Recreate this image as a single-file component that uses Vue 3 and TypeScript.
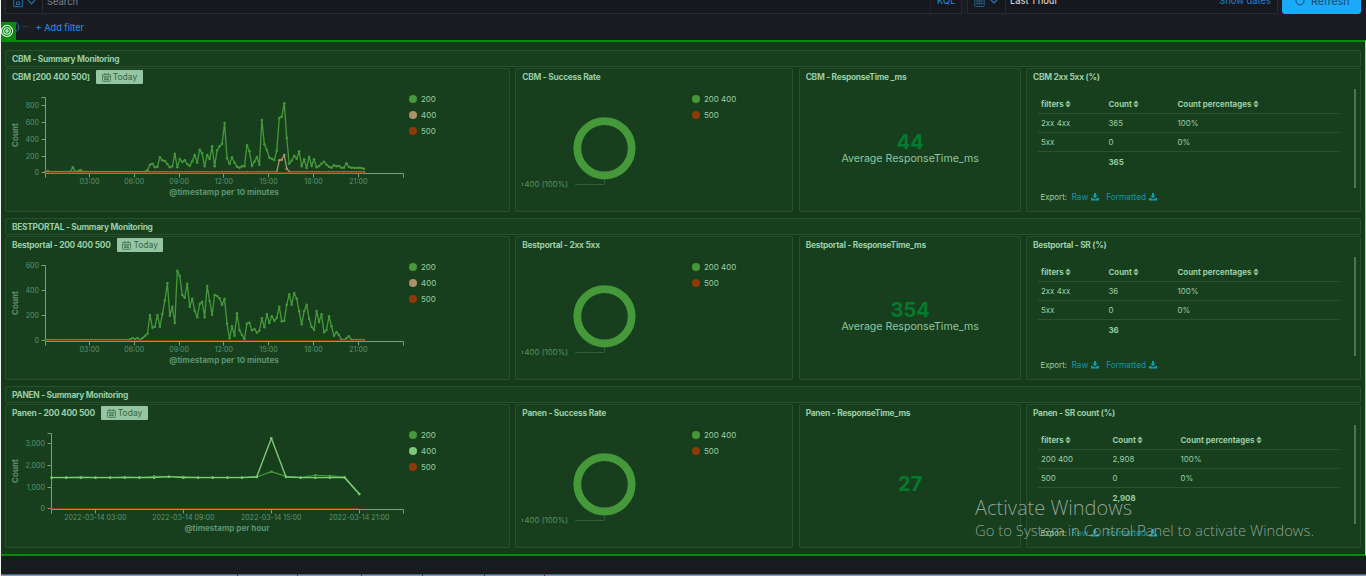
<script setup lang="ts">
interface Tick { at: number; label: string }
interface Series { color: string; points: string; dots: boolean; width: number }
interface Chart { x0: number; axisTop: number; zero: number; yTicks: Tick[]; xTicks: Tick[]; xTitle: string; titleX: number; series: Series[] }
interface Legend { label: string; color: string }
interface Group {
  name: string; chartTitle: string; pieTitle: string; metricTitle: string; tableTitle: string
  metric: string; metricLabel: string; chart: Chart; legend: Legend[]
  rows: string[][]; total: string; wide: boolean
}

const GREEN = '#45993b'
const TAN = '#ab9068'
const RUST = '#8c3a06'
const MINT = '#7fc87a'

const flat = (n: number, v: number): number[] => Array<number>(n).fill(v)

// Samples are depths below the plot's origin, in thirds of a pixel.
function line(samples: number[], x0: number, step: number, base: number): string {
  return samples.map((s, i) => `${(x0 + i * step).toFixed(2)},${(base + s / 3).toFixed(2)}`).join(' ')
}

const cbm200 = [246, 243, ...flat(8, 246), 245, 232, 245, 244, 240, 245, ...flat(24, 246), 245, 241, 224, 221, 232, 230, 202, 211, 213, 222, 232, 229, 191, 232, 207, 216, 211, 222, 227, 214, 195, 218, 179, 190, 229, 195, 207, 169, 229, 181, 169, 161, 99, 205, 222, 202, 218, 230, 233, 229, 229, 166, 184, 228, 215, 201, 224, 90, 163, 180, 203, 206, 210, 182, 84, 80, 40, 144, 221, 212, 197, 206, 184, 229, 208, 234, 200, 228, 208, 232, 228, 221, 215, 224, 230, 233, 226, 229, 228, 233, 233, 220, 231, 233, 233, 234, 233, 234, 236]
const cbm400 = [...flat(93, 247), 245, 211, 209, 195, 236, 245, ...flat(30, 247)]
const best200 = [...flat(34, 375), 373, 369, 372, 369, 375, 369, 363, 356, 300, 338, 335, 300, 335, 297, 256, 205, 302, 275, 324, 167, 183, 240, 248, 206, 275, 251, 287, 307, 267, 260, 307, 213, 258, 299, 240, 243, 250, 269, 251, 326, 370, 334, 362, 295, 346, 360, 372, 326, 323, 346, 342, 353, 347, 310, 337, 297, 324, 304, 317, 309, 275, 319, 317, 269, 238, 269, 234, 251, 289, 328, 288, 269, 311, 336, 344, 288, 321, 298, 352, 345, 304, 334, 362, 351, 360, 374, 375, 370, 364, 374, ...flat(5, 375)]
const panen200 = [277, 277, 276, 277, 277, 276, 277, 274, 275, 275, 277, 277, 277, 277, 276, 260, 274, 277, 271, 273, 276, 327]
const panen400 = [...flat(8, 278), 275, ...flat(5, 278), 276, 160, 276, ...flat(4, 278), 327]

const STEP = 2.487
const hours: Tick[] = ['03:00', '06:00', '09:00', '12:00', '15:00', '18:00', '21:00'].map((label, i) => ({ at: 84.5 + i * 44.8, label }))

const httpLegend: Legend[] = [{ label: '200', color: GREEN }, { label: '400', color: TAN }, { label: '500', color: RUST }]
const pieLegend: Legend[] = [{ label: '200 400', color: GREEN }, { label: '500', color: RUST }]

const groups: Group[] = [
  {
    name: 'CBM - Summary Monitoring', chartTitle: 'CBM [200 400 500]', pieTitle: 'CBM - Success Rate',
    metricTitle: 'CBM - ResponseTime _ms', tableTitle: 'CBM 2xx 5xx (%)', metric: '44', metricLabel: 'Average ResponseTime_ms',
    legend: httpLegend, rows: [['2xx 4xx', '365', '100%'], ['5xx', '0', '0%']], total: '365', wide: false,
    chart: {
      x0: 40.5, axisTop: 29.5, zero: 105.5, xTitle: '@timestamp per 10 minutes', titleX: 219, xTicks: hours,
      yTicks: [{ at: 37.5, label: '800' }, { at: 54.5, label: '600' }, { at: 71.5, label: '400' }, { at: 88.5, label: '200' }, { at: 104.5, label: '0' }],
      series: [
        { color: GREEN, points: line(cbm200, 40.5, STEP, 22), dots: true, width: 1.3 },
        { color: TAN, points: line(cbm400, 40.5, STEP, 22), dots: true, width: 1.3 },
        { color: RUST, points: '40.5,104.5 359.5,104.5', dots: false, width: 1.5 }
      ]
    }
  },
  {
    name: 'BESTPORTAL - Summary Monitoring', chartTitle: 'Bestportal - 200 400 500', pieTitle: 'Bestportal - 2xx 5xx',
    metricTitle: 'Bestportal - ResponseTime_ms', tableTitle: 'Bestportal - SR (%)', metric: '354', metricLabel: 'Average ResponseTime_ms',
    legend: httpLegend, rows: [['2xx 4xx', '36', '100%'], ['5xx', '0', '0%']], total: '36', wide: false,
    chart: {
      x0: 40.5, axisTop: 29.5, zero: 105.5, xTitle: '@timestamp per 10 minutes', titleX: 219, xTicks: hours,
      yTicks: [{ at: 29.5, label: '600' }, { at: 54.5, label: '400' }, { at: 79.5, label: '200' }, { at: 104.5, label: '0' }],
      series: [
        { color: GREEN, points: line(best200, 40.5, STEP, -21), dots: true, width: 1.3 },
        { color: RUST, points: '40.5,104.5 359.5,104.5', dots: false, width: 1 }
      ]
    }
  },
  {
    name: 'PANEN - Summary Monitoring', chartTitle: 'Panen - 200 400 500', pieTitle: 'Panen - Success Rate',
    metricTitle: 'Panen - ResponseTime_ms', tableTitle: 'Panen - SR count (%)', metric: '27', metricLabel: '',
    legend: [{ label: '200', color: GREEN }, { label: '400', color: MINT }, { label: '500', color: RUST }],
    rows: [['200 400', '2,908', '100%'], ['500', '0', '0%']], total: '2,908', wide: true,
    chart: {
      x0: 46.5, axisTop: 29.5, zero: 105.5, xTitle: '@timestamp per hour', titleX: 222,
      xTicks: ['03:00', '09:00', '15:00', '21:00'].map((t, i) => ({ at: 90.3 + i * 88, label: `2022-03-14 ${t}` })),
      yTicks: [{ at: 39.5, label: '3,000' }, { at: 61.5, label: '2,000' }, { at: 83.5, label: '1,000' }, { at: 104.5, label: '0' }],
      series: [
        { color: RUST, points: '46.5,104.5 354,104.5', dots: false, width: 1 },
        { color: GREEN, points: line(panen200, 46.5, 14.656, -19), dots: true, width: 1.3 },
        { color: MINT, points: line(panen400, 46.5, 14.656, -19), dots: true, width: 1.4 }
      ]
    }
  }
]

const dotList = (points: string): number[][] => points.split(' ').map(p => p.split(',').map(Number))
const taskbarMarks = [237, 297, 361, 422, 484, 544]
</script>

<template>
  <div class="page">
    <header class="query">
      <div class="search">
        <div class="saved">
          <svg width="10" height="12" viewBox="0 0 10 12"><path d="M.8 0v9.7h8.6V0M3 0v2.5h4V0M3.5 5h3.2v2.6H3.5z" fill="none" stroke="#2273a8" /></svg>
          <svg width="9" height="12" viewBox="0 0 9 12"><path d="M1 3l3.5 4 3.5-4" fill="none" stroke="#2180bd" stroke-width="1.1" /></svg>
        </div>
        <span class="placeholder">Search</span>
        <span class="kql">KQL</span>
      </div>
      <div class="time">
        <div class="quick">
          <svg width="11" height="12" viewBox="0 0 11 12"><path d="M.8 0v9.5q0 1 1 1h7.4q1 0 1-1V0M.8 2.5h9.4M2.5 5h6M2.5 7.5h6" fill="none" stroke="#24618b" /><path d="M3 3v6M5.5 3v6M8 3v6" stroke="#24618b" stroke-width=".7" /></svg>
          <svg width="8" height="12" viewBox="0 0 8 12"><path d="M1 4l3 3 3-3" fill="none" stroke="#2180bd" stroke-width="1.1" /></svg>
        </div>
        <span class="range">Last 1 hour</span>
        <span class="dates">Show dates</span>
      </div>
      <button class="refresh">
        <svg width="10" height="10" viewBox="0 0 10 10"><path d="M2.4 1.8a4 4 0 1 0 5.2 0" fill="none" stroke="#124a73" /></svg>
        Refresh
      </button>
    </header>
    <div class="filters">
      <svg width="36" height="26" viewBox="0 0 36 26"><circle cx="13" cy="13" r="4.8" fill="none" stroke="#1f70a8" /><path d="M21 12.5h7" stroke="#303238" /></svg>
      <a>+ Add filter</a>
    </div>

    <main class="board">
      <section v-for="g in groups" :key="g.name" class="group">
        <div class="panel heading">{{ g.name }}</div>
        <div class="row">
          <article class="panel">
            <h2>{{ g.chartTitle }}
              <span class="badge">
                <svg width="9" height="9" viewBox="0 0 9 9"><path d="M1.5 1.4h6q1 0 1 1v5q0 1-1 1h-6q-1 0-1-1v-5q0-1 1-1zM.5 3.3h8M2.8 0v2M6.2 0v2M2 5h5M2 6.6h5" fill="none" stroke="#3b6b4a" stroke-width=".75" /><path d="M3.2 4.2v3.2M5.8 4.2v3.2" stroke="#3b6b4a" stroke-width=".6" /></svg>
                Today
              </span>
            </h2>
            <svg class="plot" width="503" height="142" viewBox="1 1 503 142">
              <g class="axis">
                <path :d="`M${g.chart.x0 - 4} ${g.chart.axisTop}h4V${g.chart.zero}H398.5v4M${g.chart.x0} ${g.chart.zero}v4`" />
                <path v-for="t in g.chart.yTicks" :key="t.label" :d="`M${g.chart.x0 - 4} ${t.at}h4`" />
                <path v-for="t in g.chart.xTicks" :key="t.label" :d="`M${Math.floor(t.at) + 0.5} ${g.chart.zero}v4`" />
              </g>
              <text v-for="t in g.chart.yTicks" :key="t.label" class="tick" :x="g.chart.x0 - 6.5" :y="t.at + 2.6" text-anchor="end">{{ t.label }}</text>
              <text v-for="t in g.chart.xTicks" :key="t.label" class="tick" :x="t.at" y="115.8" text-anchor="middle">{{ t.label }}</text>
              <text class="axis-title" transform="translate(13 67) rotate(-90)" text-anchor="middle">Count</text>
              <text class="axis-title" :x="g.chart.titleX" y="127" text-anchor="middle">{{ g.chart.xTitle }}</text>
              <g v-for="(s, i) in g.chart.series" :key="i">
                <polyline :points="s.points" fill="none" :stroke="s.color" :stroke-width="s.width" stroke-linejoin="round" />
                <template v-if="s.dots">
                  <circle v-for="(d, k) in dotList(s.points)" :key="k" :cx="d[0]" :cy="d[1]" r="1.25" :fill="s.color" />
                </template>
              </g>
              <g v-for="(l, i) in g.legend" :key="l.label">
                <circle cx="408" :cy="31 + i * 16" r="4" :fill="l.color" />
                <text class="legend" x="416" :y="34.1 + i * 16">{{ l.label }}</text>
              </g>
            </svg>
          </article>

          <article class="panel">
            <h2>{{ g.pieTitle }}</h2>
            <svg class="plot" width="276" height="142" viewBox="1 1 276 142">
              <circle cx="89.5" cy="80.3" r="27.2" fill="none" :stroke="GREEN" stroke-width="7.8" />
              <path d="M89.5 111v5.5H60" fill="none" stroke="#305a39" />
              <path d="M7.5 114.5v3.5" stroke="#5d7c38" />
              <text class="slice" x="53" y="119.2" text-anchor="end">400 (100%)</text>
              <g v-for="(l, i) in pieLegend" :key="l.label">
                <circle cx="181" :cy="31 + i * 16" r="4" :fill="l.color" />
                <text class="legend" x="189" :y="34.1 + i * 16">{{ l.label }}</text>
              </g>
            </svg>
          </article>

          <article class="panel">
            <h2>{{ g.metricTitle }}</h2>
            <div class="metric" :class="{ alone: !g.metricLabel }">
              <strong>{{ g.metric }}</strong>
              <span v-if="g.metricLabel">{{ g.metricLabel }}</span>
            </div>
          </article>

          <article class="panel">
            <h2>{{ g.tableTitle }}</h2>
            <div class="scroll">
              <div class="grid" :class="{ wide: g.wide }">
                <div class="tr th">
                  <span v-for="h in ['filters', 'Count', 'Count percentages']" :key="h">{{ h }}<svg width="6" height="8" viewBox="0 0 6 8"><path d="M.2 3.5L3 .6l2.8 2.9zM.2 4.5h5.6L3 7.4z" fill="#8fc9a0" /></svg></span>
                </div>
                <div v-for="r in g.rows" :key="r[0]" class="tr"><span v-for="(c, i) in r" :key="i">{{ c }}</span></div>
                <div class="tr total"><span></span><span>{{ g.total }}</span></div>
              </div>
              <div class="export">
                <span>Export:</span>
                <a v-for="k in ['Raw', 'Formatted']" :key="k">{{ k }}<svg width="8" height="8" viewBox="0 0 8 8"><path d="M3 0h2v2.5h1.8L4 5.2 1.2 2.5H3zM0 5h1.8L4 6.6 6.2 5H8v2.6H0z" fill="#149cae" /></svg></a>
              </div>
            </div>
          </article>
        </div>
      </section>
    </main>

    <footer class="taskbar">
      <svg width="1366" height="2"><path d="M1 .5h1365" stroke="#5b5f66" /><path d="M1 1.5h1365" stroke="#56b4d3" /><path v-for="m in taskbarMarks" :key="m" :d="`M${m}.5 0v2`" stroke="#3c464e" /></svg>
    </footer>

    <div class="target">
      <svg width="16" height="19" viewBox="0 0 16 19"><g fill="none" stroke="#e4f6e4" stroke-width="1.1"><circle cx="7" cy="9" r="5.6" /><circle cx="7" cy="9" r="3.3" /><circle cx="7" cy="9" r="1.1" /></g></svg>
    </div>
    <svg class="watermark" width="345" height="50">
      <text x="0" y="20" font-size="19.5" textLength="157" lengthAdjust="spacingAndGlyphs">Activate Windows</text>
      <text x="0" y="41" font-size="14.6" textLength="339" lengthAdjust="spacingAndGlyphs">Go to System in Control Panel to activate Windows.</text>
    </svg>
  </div>
</template>

<style>
body { margin: 0; background: #1b1c22; overflow: hidden; }
</style>

<style scoped>
* { box-sizing: border-box; }
.page { position: relative; width: 1366px; height: 576px; overflow: hidden; background: #1b1c22; font-family: Inter, "Liberation Sans", sans-serif; border-left: 1px solid #f2f5f2; display: flex; flex-direction: column; }
.query { height: 14px; display: flex; padding-left: 4px; flex: none; font-size: 9.4px; line-height: 12px; }
.search, .time { display: flex; height: 14px; background: #17181d; border: 1px solid #292a30; border-top: 0; }
.search { width: 957px; margin-right: 5px; }
.saved { width: 37px; border-right: 1px solid #292a30; padding-left: 7px; display: flex; gap: 4px; margin-top: -3px; }
.placeholder { flex: 1; padding-left: 4px; margin-top: -4px; color: #7d828d; font-size: 9.4px; }
.kql { width: 31px; border-left: 1px solid #22232a; padding-left: 6px; margin-top: -5px; color: #1c8be0; }
.time { width: 311px; margin-right: 4px; }
.quick { width: 38px; border-right: 1px solid #292a30; padding-left: 6px; display: flex; gap: 5px; margin-top: -4px; }
.range { flex: 1; padding-left: 4px; margin-top: -5px; color: #dfe3ea; }
.dates { color: #1c80d6; padding-right: 6px; margin-top: -5px; }
.refresh { width: 79px; height: 14px; border: 0; border-radius: 0 0 3px 3px; background: #1ba9f8; color: #124a73; font: 10.6px/4px Inter, sans-serif; padding: 0 0 0 13px; display: flex; align-items: flex-start; gap: 6px; }
.refresh svg { margin-top: -4px; }
.filters { height: 26px; display: flex; flex: none; }
.filters a { color: #1b98f5; font-size: 9.2px; line-height: 28px; margin-left: -1.5px; }
.board { height: 516px; flex: none; background: #153a1a; border-top: 2px solid #058b0b; border-bottom: 2px solid #058b0b; border-right: 1px solid #a6d8ab; margin-left: -1px; border-left: 1px solid #a6d8ab; padding: 8px 4px 0; }
.group { margin-bottom: 6px; height: 162px; }
.panel { background: #183f1d; border: 1px solid #28502f; border-radius: 2px; position: relative; overflow: hidden; }
.heading { height: 17px; margin-bottom: 1px; color: #98cda6; font-size: 8.4px; line-height: 16px; font-weight: 700; letter-spacing: -.27px; padding-left: 6px; width: 1356px; }
.row { display: grid; grid-template-columns: 505px 278px 222px 335px; column-gap: 5.33px; height: 144px; }
h2 { margin: 0; height: 17px; padding-left: 6px; font-size: 8.4px; line-height: 17px; font-weight: 700; letter-spacing: -.25px; color: #98cda6; display: flex; align-items: flex-start; gap: 6.4px; white-space: nowrap; }
.badge { display: flex; align-items: center; gap: 2px; width: 46.5px; height: 14px; line-height: 14px; border-radius: 1px; background: #95c5a3; color: #356645; font-weight: 400; font-size: 8.5px; letter-spacing: 0; padding-left: 5.5px; margin-top: 1px; }
.plot { display: block; margin-top: -17px; }
.axis path { fill: none; stroke: #6fa47c; stroke-width: 1; }
.tick { font-size: 7.1px; fill: #5b9471; }
.axis-title { font-size: 8.05px; font-weight: 700; fill: #5b9471; }
.legend { font-size: 7.95px; fill: #98cda6; }
.slice { font-size: 7.8px; fill: #5b8f69; }
.metric { height: 126px; padding: 45px 0 0 1px; display: flex; flex-direction: column; align-items: center; }
.metric.alone { padding-top: 51px; }
.metric strong { font-size: 20px; line-height: 22px; color: #057a2e; }
.metric span { font-size: 10.6px; line-height: 12px; color: #8fc4a0; }
.scroll { margin: 3px 4px 0 11px; height: 99px; border-right: 2px solid #4a7653; overflow: visible; color: #98cda6; font-size: 7.9px; }
.grid { width: 301px; padding-top: 6px; }
.tr { height: 19px; border-bottom: 1px solid #2a5332; display: grid; grid-template-columns: 67.5px 69px 1fr; padding-left: 3px; line-height: 18px; white-space: nowrap; }
.wide .tr { grid-template-columns: 71.5px 68px 1fr; }
.th, .total { font-weight: 700; }
.th svg { margin-left: 1.5px; vertical-align: -1px; }
.total { border: 0; line-height: 20px; }
.export { display: flex; gap: 7.5px; padding: 20px 0 0 2.5px; line-height: 12px; }
.export span { margin-right: -3px; }
.export a { color: #1791a5; font-size: 8.3px; display: flex; gap: 2.5px; align-items: center; }
.taskbar { margin-top: auto; height: 2px; margin-left: -1px; }
.taskbar svg { display: block; }
.target { position: absolute; left: -1px; top: 22px; width: 16px; height: 19px; background: #058b0b; }
.watermark { position: absolute; left: 974px; top: 495px; fill: #a5b2a8; fill-opacity: .88; font-family: "Open Sans", "Noto Sans", sans-serif; font-weight: 300; }
</style>
